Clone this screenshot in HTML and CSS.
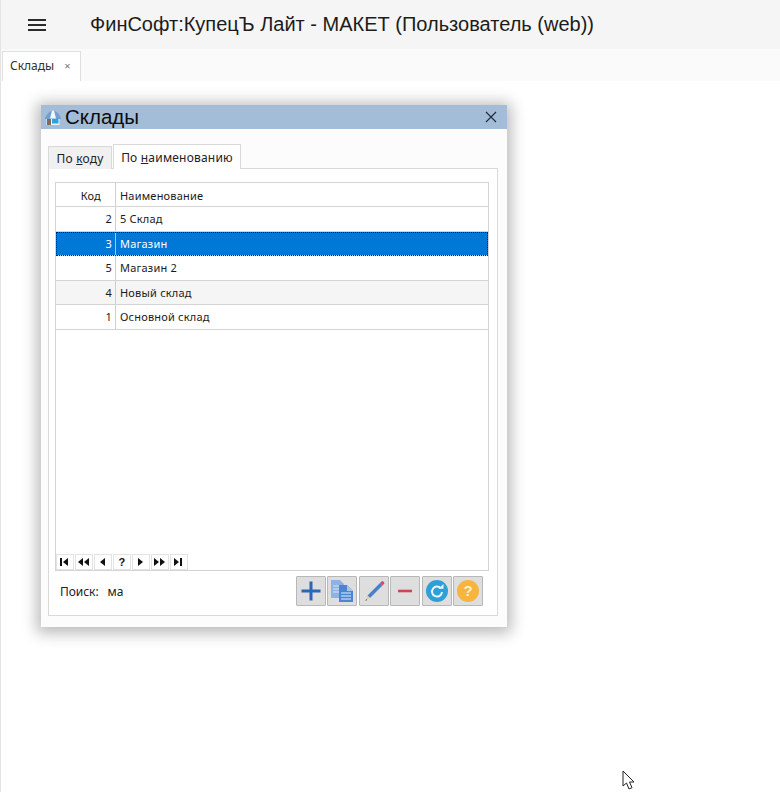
FILE: index.html
```html
<!DOCTYPE html>
<html lang="ru">
<head>
<meta charset="utf-8">
<title>ФинСофт:КупецЪ Лайт</title>
<link rel="stylesheet" href="styles.css">
</head>
<body>
<div class="app">
  <header class="topbar">
    <svg class="burger" width="20" height="14" viewBox="0 0 20 14"><path d="M1 2h18M1 7h18M1 12h18" stroke="#2b2b2b" stroke-width="2" fill="none"/></svg>
    <h1 class="app-title">ФинСофт:КупецЪ Лайт - МАКЕТ (Пользователь (web))</h1>
  </header>
  <nav class="tabstrip">
    <div class="doc-tab"><span>Склады</span><span class="doc-close">×</span></div>
  </nav>
  <main class="desktop">
    <section class="window">
      <div class="win-title">
        <svg class="win-icon" width="16" height="15" viewBox="0 0 16 15">
          <path d="M8 0 L13 3 L16 8 V9 H0 V8 L3 3 Z" fill="#6f9fd6"/>
          <path d="M7 0.500 L5 8.500 H11 L9 0.500 Z" fill="#f4f8fc"/>
          <rect x="1.500" y="9" width="13" height="6" fill="#eef3f8"/>
          <rect x="2" y="9" width="4" height="6" fill="#85675c"/>
          <rect x="7" y="9" width="6.500" height="4.500" fill="#27a6de"/>
        </svg>
        <span class="win-name">Склады</span>
        <svg class="win-close" width="12" height="12" viewBox="0 0 12 12"><path d="M1 1l10 10M11 1L1 11" stroke="#1d2a3a" stroke-width="1.100" fill="none"/></svg>
      </div>
      <div class="win-body">
        <div class="tabs">
          <div class="tab">По <u>к</u>оду</div>
          <div class="tab tab-active">По <u>н</u>аименованию</div>
        </div>
        <div class="panel">
          <div class="grid">
            <div class="row head"><div class="c-code">Код</div><div class="c-name">Наименование</div></div>
            <div class="row"><div class="c-num">2</div><div class="c-name">5 Склад</div></div>
            <div class="row selected"><div class="c-num">3</div><div class="c-name">Магазин</div></div>
            <div class="row"><div class="c-num">5</div><div class="c-name">Магазин 2</div></div>
            <div class="row alt"><div class="c-num">4</div><div class="c-name">Новый склад</div></div>
            <div class="row low"><div class="c-num">1</div><div class="c-name">Основной склад</div></div>
            <div class="grid-fill"></div>
            <div class="pager">
              <button class="pg"><svg width="9" height="8" viewBox="0 0 9 8"><path d="M0 0h2v8H0zM8 0v8L3 4z"/></svg></button>
              <button class="pg"><svg width="11" height="8" viewBox="0 0 11 8"><path d="M5 0v8L0 4zM11 0v8L6 4z"/></svg></button>
              <button class="pg"><svg width="5" height="8" viewBox="0 0 5 8"><path d="M5 0v8L0 4z"/></svg></button>
              <button class="pg pg-q">?</button>
              <button class="pg"><svg width="5" height="8" viewBox="0 0 5 8"><path d="M0 0v8l5-4z"/></svg></button>
              <button class="pg"><svg width="11" height="8" viewBox="0 0 11 8"><path d="M0 0v8l5-4zM6 0v8l5-4z"/></svg></button>
              <button class="pg"><svg width="9" height="8" viewBox="0 0 9 8"><path d="M0 0v8l5-4zM6 0h2v8H6z"/></svg></button>
            </div>
          </div>
          <div class="footer">
            <span class="search-label">Поиск:</span>
            <span class="search-value">ма</span>
            <div class="tools">
              <button class="tool"><svg width="24" height="24" viewBox="0 0 24 24"><path d="M12 2.500v19M2.500 12h19" stroke="#2b67b4" stroke-width="3" fill="none"/></svg></button>
              <button class="tool"><svg width="24" height="24" viewBox="0 0 24 24">
                <path d="M1 1h9l4 4v14H1z" fill="#8fb2e4"/>
                <path d="M3 7h8M3 10h8M3 13h8" stroke="#d7e4f6" stroke-width="1"/>
                <path d="M9 6h8l6 6v11H9z" fill="#4a86d2"/>
                <path d="M17 6l6 6h-6z" fill="#a9c7ee"/>
                <path d="M11 14h10M11 17h10M11 20h10" stroke="#e4eefb" stroke-width="1.200"/>
              </svg></button>
              <button class="tool"><svg width="24" height="24" viewBox="0 0 24 24">
                <path d="M5.500 16.500L18 4l2.500 2.500L8 19z" fill="#4a80c8"/>
                <path d="M18 4l1.500-1.500a1.300 1.300 0 0 1 1.800 0l.7.7a1.300 1.300 0 0 1 0 1.800L20.500 6.500z" fill="#d9485f"/>
                <path d="M5.500 16.500L8 19l-4 2z" fill="#e8c9a0"/>
                <path d="M3.300 22l.9-1.900 1 1z" fill="#555"/>
              </svg></button>
              <button class="tool"><svg width="24" height="24" viewBox="0 0 24 24"><path d="M5 12h14" stroke="#cf4453" stroke-width="2.600" fill="none"/></svg></button>
              <button class="tool"><svg width="24" height="24" viewBox="0 0 24 24">
                <circle cx="12" cy="12" r="11" fill="#2f9fd8"/>
                <path d="M16 9.500A5 5 0 1 0 17 13" stroke="#e8f5fc" stroke-width="2" fill="none"/>
                <path d="M13.500 9.800h5V5z" fill="#e8f5fc"/>
              </svg></button>
              <button class="tool"><svg width="24" height="24" viewBox="0 0 24 24">
                <circle cx="12" cy="12" r="11" fill="#f5b53f"/>
                <text x="12" y="17" text-anchor="middle" class="help-mark">?</text>
              </svg></button>
            </div>
          </div>
        </div>
      </div>
    </section>
    <svg class="cursor" width="14" height="20" viewBox="0 0 14 20"><path d="M1 1v15l3.500-3 2.500 6 3-1.300-2.500-5.700H12z" fill="#fff" stroke="#222" stroke-width="1"/></svg>
  </main>
</div>
</body>
</html>
```

FILE: styles.css
```css
* { box-sizing: border-box; }
html, body { margin: 0; height: 100%; background: #fff; }
body { font-family: "Noto Sans", sans-serif; font-size: 11px; color: #1a1a1a; overflow: hidden; }
.app { height: 792px; display: flex; flex-direction: column; border-left: 1px solid #e4e4e4; }
.topbar { height: 49px; background: #f5f5f5; display: flex; align-items: center; padding-left: 26px; flex: none; }
.burger { flex: none; }
.app-title { margin: 0 0 0 43px; font: 400 20px "Liberation Sans", Arial, sans-serif; color: #1c1c1c; white-space: nowrap; }
.tabstrip { height: 32px; background: #fafafa; padding: 2px 0 0 1px; flex: none; display: flex; }
.doc-tab { width: 79px; height: 30px; background: #fff; border: 1px solid #e0e0e0; border-bottom: 0; display: flex; align-items: center; padding: 0 0 2px 7px; font-size: 12px; color: #333; gap: 10px; }
.doc-close { font-size: 11px; color: #777; }
.desktop { flex: 1; position: relative; background: #fff; }
.window { position: absolute; left: 40px; top: 24px; width: 466px; height: 521.500px; background: #fcfcfc; box-shadow: 0 2px 14px 4px rgba(0,0,0,.28); display: flex; flex-direction: column; }
.win-title { height: 24px; background: #a3bcd8; display: flex; align-items: center; padding: 0 10px 0 4px; flex: none; }
.win-icon { flex: none; }
.win-name { font: 400 20.500px "Liberation Sans", Arial, sans-serif; color: #0b0b0b; margin-left: 4px; }
.win-close { margin-left: auto; }
.win-body { flex: 1; padding: 15px 9px 11px 7px; display: flex; flex-direction: column; min-height: 0; }
.tabs { display: flex; align-items: flex-end; height: 25px; flex: none; position: relative; z-index: 1; margin-bottom: -1px; }
.tab { height: 23px; width: 64px; background: #f0f0f0; border: 1px solid #d9d9d9; border-bottom: 0; text-align: center; line-height: 23px; font-size: 12px; letter-spacing: .2px; color: #222; }
.tab-active { height: 25px; width: 128px; margin-left: 1px; background: #fff; line-height: 26px; position: relative; }
.panel { flex: 1; background: #fff; border: 1px solid #d9d9d9; padding: 13px 8px 8px 6px; display: flex; flex-direction: column; min-height: 0; }
.grid { height: 389px; border: 1px solid #d4d4d4; display: flex; flex-direction: column; flex: none; background: #fff; }
.row { display: flex; height: 24.600px; border-bottom: 1px solid #d4d4d4; flex: none; line-height: 23px; font-size: 11px; letter-spacing: .2px; }
.row.head { height: 24px; line-height: 25px; }
.row.low { line-height: 24px; }
.c-code, .c-num { width: 60px; flex: none; border-right: 1px solid #cfcfcf; text-align: right; padding-right: 3px; }
.c-code { padding-right: 14px; }
.c-name { padding-left: 4px; flex: 1; }
.row.alt { background: #f5f5f5; }
.row.selected { background: #0078d7; color: #fff; outline: 1px dotted #0b1f33; outline-offset: -1px; }
.row.selected .c-num { border-right-color: #9cc9ee; }
.grid-fill { flex: 1; }
.pager { display: flex; height: 16px; flex: none; gap: 1.500px; }
.pg { width: 17.500px; height: 15.500px; padding: 0; background: #fff; border: 1px solid #e3e3e3; display: flex; align-items: center; justify-content: center; }
.pg svg { fill: #111; }
.pg-q { font: 700 11px "Liberation Sans", sans-serif; color: #111; }
.footer { flex: 1; display: flex; align-items: center; font-size: 12px; padding: 5px 6px 0 5px; }
.search-label { margin-right: 9px; color: #222; letter-spacing: -.05px; }
.search-value { color: #222; }
.tools { margin-left: auto; display: flex; gap: 1.500px; }
.tool { width: 30px; height: 30px; padding: 0; background: #dedede; border: 1px solid #b8b8b8; border-radius: 1px; display: flex; align-items: center; justify-content: center; }
.help-mark { font: 700 15px "Liberation Sans", sans-serif; fill: #fdeec8; }
.cursor { position: absolute; left: 621px; top: 689px; }
```
